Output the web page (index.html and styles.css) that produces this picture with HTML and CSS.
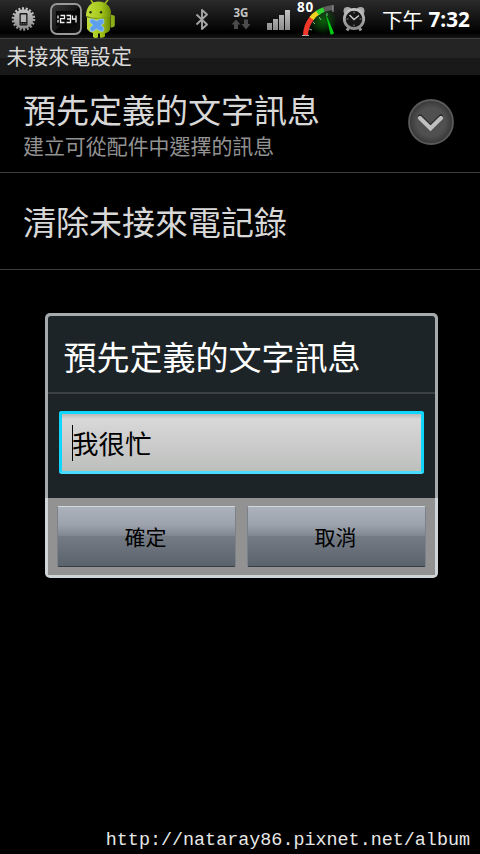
FILE: index.html
```html
<!DOCTYPE html>
<html lang="zh-Hant">
<head>
<meta charset="utf-8">
<title>未接來電設定</title>
<link rel="stylesheet" href="styles.css">
</head>
<body>
<div class="screen">
  <header class="status">
    <svg class="ic-chip" width="26" height="26" viewBox="0 0 26 26">
      <defs><linearGradient id="silver" x1="0" y1="0" x2="0" y2="1"><stop offset="0" stop-color="#c4c4c4"/><stop offset="1" stop-color="#8c8c8c"/></linearGradient></defs>
      <circle cx="12.500" cy="13" r="10.300" fill="none" stroke="url(#silver)" stroke-width="3" stroke-dasharray="2 1.596"/>
      <circle cx="12.500" cy="13" r="9.800" fill="url(#silver)"/>
      <rect x="8.500" y="7" width="8" height="12.500" rx="1.200" fill="#181818"/>
      <rect x="9.800" y="8.500" width="5.400" height="7.500" fill="#b4b4b4"/>
      <path d="M9.700 17.800h1.300M12 17.800h1.300M14.200 17.800h1.200" stroke="#999" stroke-width=".7"/>
    </svg>
    <svg class="ic-counter" width="34" height="34" viewBox="0 0 34 34">
      <defs><linearGradient id="gloss" x1="0" y1="0" x2="1" y2="1"><stop offset="0" stop-color="#3a3a3a"/><stop offset=".5" stop-color="#161616"/><stop offset=".52" stop-color="#050505"/><stop offset="1" stop-color="#111"/></linearGradient></defs>
      <rect x="2" y="2" width="30" height="30" rx="6" fill="url(#gloss)" stroke="#999" stroke-width="1.800"/>
      <rect x="7" y="9" width="20" height="15" fill="#080808"/>
      <path d="M9 13.500v3M9 18v2.500M11.500 13.500h4v3.200h-4v3.800h4M17.500 13.500h4v7h-4M18 17h3.500M23.500 13.500v3.500h3.500M27 13.500v7" fill="none" stroke="#eee" stroke-width="1.300"/>
    </svg>
    <svg class="ic-droid" width="32" height="38" viewBox="0 0 32 38">
      <defs><linearGradient id="green" x1="0" y1="0" x2="1" y2="0"><stop offset="0" stop-color="#c2de3b"/><stop offset=".6" stop-color="#a5c71c"/><stop offset="1" stop-color="#6c8c06"/></linearGradient></defs>
      <path d="M5 0l2.500 4M22 0l-3.500 4" stroke="#a8c51c" stroke-width="1.500"/>
      <path d="M0 16C0 6 6 1.500 12.500 1.500S25 6 25 13l-1 4Q12 21 0 16Z" fill="url(#green)"/>
      <circle cx="4.500" cy="12.300" r="1.200" fill="#263008"/><circle cx="15" cy="12.300" r="1.200" fill="#263008"/>
      <path d="M1 17q12 3.500 23-1v14q-2 3-5 3.500v3q-1 1.500-5 1v-4h-2v4q-3 1-5-.5v-4q-4-1-6-4Z" fill="url(#green)"/>
      <path d="M0 16.500q12 4 24-.5" fill="none" stroke="#7f9e12" stroke-width=".8"/>
      <path d="M24.500 14.500l3.500 1q.8.300.8 1.500v8q0 1.500-1.300 2l-3 .8Z" fill="#8dae14"/>
      <path d="M4 19q4-.5 6.500 2 3-2.500 7-2l.5 4-3 2 3 3-1 3.500q-3 0-6.500-2.500-3 3-6 2.500l-.5-3.500 3-3-3-2.500Z" fill="#5ea0ee" stroke="#a3cdf6" stroke-width=".7"/>
    </svg>
    <svg class="ic-bt" width="14" height="24" viewBox="0 0 14 24">
      <path d="M1.500 6.500L12 16.500 7 21V2l5 4.500L1.500 16.500" fill="none" stroke="#a5a5a5" stroke-width="1.900" stroke-linejoin="round"/>
    </svg>
    <div class="net">
      <span class="net-label">3G</span>
      <svg width="20" height="11" viewBox="0 0 20 11"><path d="M5 .5L9.500 5.500H7V10H3V5.500H.5Z" fill="#4b4b4b"/><path d="M13 .5h4V5h2.500L15 10.500 10.500 5H13Z" fill="#4b4b4b"/></svg>
    </div>
    <svg class="ic-signal" width="24" height="21" viewBox="0 0 24 21"><path d="M0 14h5v7H0ZM6 10h5v11H6ZM12 6h5v15h-5ZM18 1h5v20h-5Z" fill="url(#silver)"/></svg>
    <div class="gauge">
      <svg width="36" height="37" viewBox="0 0 36 37">
        <defs><radialGradient id="glow"><stop offset="0" stop-color="#086009"/><stop offset="1" stop-color="#086009" stop-opacity="0"/></radialGradient></defs>
        <circle cx="22" cy="21" r="14" fill="url(#glow)"/>
        <path d="M4.500 35Q5 25 11 18" fill="none" stroke="#f2382a" stroke-width="5"/>
        <path d="M10.500 18.500Q13 15 17 12.500" fill="none" stroke="#efd422" stroke-width="5"/>
        <path d="M16.500 13Q19 11 23 9.500" fill="none" stroke="#31d331" stroke-width="5"/>
        <path d="M23 9.500Q27 8 32 7.500" fill="none" stroke="#5c5c5c" stroke-width="5"/>
        <path d="M1 35.500h7M32 5v7" stroke="#aaa"/>
        <path d="M8 29l3 1M12 22l2 2M18 17l2 3M26 13v3" stroke="#9da" stroke-width=".8"/>
        <path d="M24.500 13l8.500 20q-1.500 2-3.500 1.500Z" fill="#00cc14"/>
      </svg>
      <span class="gauge-label">80</span>
    </div>
    <svg class="ic-alarm" width="24" height="26" viewBox="0 0 24 26">
      <path d="M5 24.500l2.500-4M19 24.500l-2.500-4" stroke="#999" stroke-width="3"/>
      <circle cx="5.500" cy="5" r="4" fill="#a8a8a8"/><circle cx="18.500" cy="5" r="4" fill="#a8a8a8"/>
      <circle cx="12" cy="13" r="9.700" fill="#151515" stroke="url(#silver)" stroke-width="2.800"/>
      <path d="M7.500 9L12 13.500l5-4" fill="none" stroke="#ccc" stroke-width="1.500"/>
      <path d="M12 5.500v2M12 18.500v2M4.500 13h2M17.500 13h2" stroke="#888"/>
    </svg>
    <div class="clock"><span class="ampm">下午</span><b>7:32</b></div>
  </header>
  <div class="titlebar">未接來電設定</div>
  <main class="list">
    <div class="row">
      <div class="texts">
        <div class="name">預先定義的文字訊息</div>
        <div class="desc">建立可從配件中選擇的訊息</div>
      </div>
      <svg class="more" width="46" height="46" viewBox="0 0 46 46">
        <defs><radialGradient id="disc"><stop offset=".65" stop-color="#505050"/><stop offset="1" stop-color="#363636"/></radialGradient></defs>
        <circle cx="23" cy="23" r="22" fill="url(#disc)" stroke="#5a5a5a" stroke-width="1.800"/>
        <path d="M12 17.500L22.500 28 33 17.500" fill="none" stroke="#222" stroke-width="4.200" stroke-linecap="round"/>
        <path d="M12 19L22.500 29.200 33 19" fill="none" stroke="#c0c0c0" stroke-width="4.200" stroke-linecap="round"/>
      </svg>
    </div>
    <div class="row"><div class="name">清除未接來電記錄</div></div>
  </main>
  <footer class="credit">http://nataray86.pixnet.net/album</footer>
  <section class="dialog">
    <div class="dialog-body">
      <h1 class="dialog-title">預先定義的文字訊息</h1>
      <div class="field"><span class="caret"></span>我很忙</div>
    </div>
    <div class="actions">
      <button class="btn">確定</button>
      <button class="btn">取消</button>
    </div>
  </section>
</div>
</body>
</html>
```
FILE: styles.css
```css
* { box-sizing: border-box; }
body { margin: 0; background: #000; font-family: "Noto Sans", "Noto Sans CJK TC", sans-serif; }
svg { display: block; flex: none; }
.screen { position: relative; width: 480px; height: 854px; overflow: hidden; display: flex; flex-direction: column; background: #000; }
.status { height: 38px; flex: none; display: flex; align-items: flex-start; padding-left: 11px; background: linear-gradient(#2b2b2b, #060606 75%, #000 85%, #141414); }
.ic-chip { margin-top: 6px; }
.ic-counter { margin: 2px 0 0 12px; }
.ic-droid { margin-left: 3px; }
.ic-bt { margin: 8px 0 0 77px; }
.net { margin: 6px 0 0 22px; width: 20px; height: 26px; display: flex; flex-direction: column; align-items: center; }
.net-label { height: 13px; font: bold 11.500px/13px "Noto Sans", sans-serif; color: #c4c4c4; }
.ic-signal { margin: 9px 0 0 16px; }
.gauge { position: relative; margin-left: 10px; width: 36px; height: 37px; }
.gauge-label { position: absolute; left: -4px; top: 0; font: bold 13.500px/14px "Noto Sans", sans-serif; color: #fff; letter-spacing: .7px; }
.ic-alarm { margin: 6px 0 0 5px; }
.clock { margin-left: 16px; height: 38px; display: flex; color: #fff; line-height: 38px; white-space: nowrap; }
.ampm { width: 46.500px; font-family: "Noto Sans CJK TC", sans-serif; font-weight: 400; font-size: 20.500px; }
.clock b { font-family: "Noto Sans", sans-serif; font-size: 20.700px; line-height: 39px; }
.titlebar { height: 37px; flex: none; padding-left: 6.500px; border-top: 1px solid #414141; background: linear-gradient(#242424 0 19px, #191919 19px); color: #dadada; font: 20.900px/33px "Noto Sans CJK TC", sans-serif; }
.list { flex: none; }
.row { display: flex; align-items: center; justify-content: space-between; height: 97px; padding: 0 26px 0 23px; border-bottom: 1px solid #3d3d3d; }
.row:first-child { height: 98px; }
.texts { margin-top: -2px; }
.name { font: 33px/44px "Noto Sans CJK TC", sans-serif; color: #d8d8d8; white-space: nowrap; }
.desc { font: 20.950px/28px "Noto Sans CJK TC", sans-serif; color: #929292; white-space: nowrap; }
.more { margin-top: -4px; }
.credit { margin: auto 10px 2px 0; text-align: right; color: #e8e8e8; font: 18.400px/22px "Liberation Mono", monospace; white-space: nowrap; }
.dialog { position: absolute; left: 45px; top: 313px; width: 393px; height: 265px; border-radius: 5px; padding: 3px; background: linear-gradient(#a5abad 0 185px, #d0d6d8 185px); }
.dialog-body { height: 182px; background: #1d2427; border-radius: 3px 3px 0 0; }
.dialog-title { margin: 0; height: 78px; padding-left: 15.500px; border-bottom: 2px solid #3c4143; color: #fff; font: 33px/80px "Noto Sans CJK TC", sans-serif; }
.field { margin: 17px 11px 0; height: 63px; display: flex; align-items: center; padding-left: 10px; border: 3px solid #10d5ff; border-bottom-color: #4adcff; border-radius: 3px; background: linear-gradient(#b8b8b8, #d7d8d7 5px, #bdbfbd); color: #000; font: 26.500px/56px "Noto Sans CJK TC", sans-serif; }
.caret { width: 1px; height: 36px; margin-right: -1px; background: #000; }
.actions { height: 77px; padding: 8px 9px; display: flex; gap: 11px; background: #929292; }
.btn { flex: 1; height: 61px; border: 1px solid #7b828c; border-top-color: #d3d8dd; border-bottom: 1px solid #373b42; border-radius: 2px; background: linear-gradient(#abb2bb, #9ca3ac 30%, #808790 49%, #747b85 50%, #5a626c); color: #000; font: 21px/58px "Noto Sans CJK TC", sans-serif; padding: 0 2px 2px 0; }
```
